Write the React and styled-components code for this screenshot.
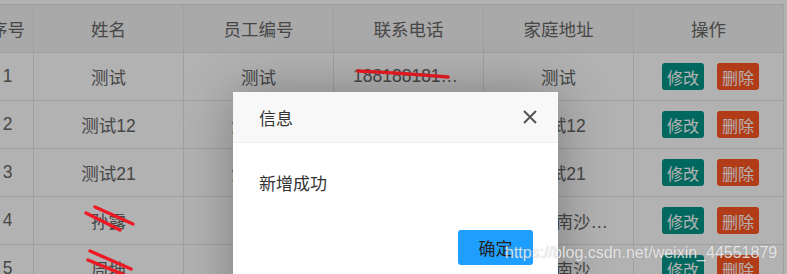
import React from "react";
import styled, { createGlobalStyle } from "styled-components";

const Global = createGlobalStyle`
  html, body { margin: 0; padding: 0; background: #fff; }
  body { width: 787px; height: 274px; overflow: hidden; position: relative;
    font-family: "Liberation Sans", Arial, "Noto Sans CJK SC", sans-serif; }
`;

const Page = styled.div`
  position: relative;
  width: 787px;
  height: 274px;
  overflow: hidden;
  background: #fff;
  padding-top: 4px;
  box-sizing: border-box;
`;

const Table = styled.div`
  margin-left: -18px;
  width: 802px;
  border-top: 1px solid #e6e6e6;
`;

const Row = styled.div`
  display: grid;
  grid-template-columns: 52px repeat(5, 150px);
  height: 48px;
  background: ${(p) => (p.$head ? "#f2f2f2" : "#fff")};
  border-bottom: 1px solid #e6e6e6;
  box-sizing: border-box;
`;

const Cell = styled.div`
  position: relative;
  display: flex;
  align-items: center;
  justify-content: center;
  padding: ${(p) => (p.$narrow ? "0" : p.$ops ? "0 17px 0 21px" : "0 19px")};
  border-right: 1px solid #e6e6e6;
  color: #666;
  font-size: 17.5px;
  min-width: 0;
  box-sizing: border-box;
  gap: 13px;
`;

const Text = styled.span`
  display: block;
  max-width: 100%;
  overflow: hidden;
  white-space: nowrap;
  text-overflow: ellipsis;
`;

const SmallBtn = styled.span`
  display: inline-flex;
  align-items: center;
  justify-content: center;
  width: 42px;
  height: 27px;
  border-radius: 3px;
  font-size: 16px;
  color: #fff;
  background: ${(p) => (p.$danger ? "#ff5722" : "#009688")};
`;

const Scribble = styled.svg`
  position: absolute;
  left: 0;
  top: 0;
  overflow: visible;
  pointer-events: none;
`;

const Shade = styled.div`
  position: absolute;
  inset: 0;
  background: rgba(0, 0, 0, 0.3);
`;

const Layer = styled.div`
  position: absolute;
  left: 233px;
  top: 92px;
  width: 325px;
  height: 240px;
  background: #fff;
  box-shadow: 1px 1px 50px rgba(0, 0, 0, 0.3);
  font-family: "Noto Sans CJK SC", "Liberation Sans", sans-serif;
`;

const LayerTitle = styled.div`
  height: 50px;
  display: flex;
  align-items: center;
  justify-content: space-between;
  padding: 0 20px 0 26px;
  background: #f8f8f8;
  border-bottom: 1px solid #eee;
  color: #333;
  font-size: 17px;
`;

const CloseIcon = styled.svg`
  width: 16px;
  height: 16px;
  display: block;
`;

const LayerBody = styled.div`
  padding: 28px 26px 0;
  height: 59px;
  color: #333;
  font-size: 17px;
  line-height: 24px;
`;

const BtnBar = styled.div`
  display: flex;
  justify-content: flex-end;
  padding: 0 25px 0 0;
`;

const OkBtn = styled.span`
  display: inline-flex;
  align-items: center;
  justify-content: center;
  width: 75px;
  height: 35px;
  border-radius: 3px;
  background: #1e9fff;
  color: #222;
  font-size: 17px;
`;

const Watermark = styled.div`
  position: absolute;
  left: 505px;
  top: 244px;
  font-family: "Liberation Sans", Arial, sans-serif;
  font-size: 16px;
  color: rgba(255, 255, 255, 0.75);
  text-shadow: 0 0 1px rgba(120, 120, 120, 0.5);
  white-space: nowrap;
`;

const head = ["序号", "姓名", "员工编号", "联系电话", "家庭地址", "操作"];
const rows = [
  ["1", "测试", "测试", "188188181888", "测试"],
  ["2", "测试12", "测试12", "13812345678", "测试12"],
  ["3", "测试21", "测试21", "13812345678", "测试21"],
  ["4", "孙露", "1004", "13812345678", "广州市南沙区黄阁镇"],
  ["5", "周坤", "1005", "13812345678", "广州市南沙区黄阁镇"],
];

const Red = ({ lines }) => (
  <Scribble width="1" height="1">
    {lines.map((d, i) => (
      <path key={i} d={d} stroke="#ec1a24" strokeWidth="3.4" fill="none" strokeLinecap="round" />
    ))}
  </Scribble>
);

export default function App() {
  return (
    <>
      <Global />
      <Page>
        <Table>
          <Row $head>
            {head.map((h, i) => (
              <Cell key={h} $narrow={i === 0}>
                <Text>{h}</Text>
              </Cell>
            ))}
          </Row>
          {rows.map((r) => (
            <Row key={r[0]}>
              {r.map((c, i) => (
                <Cell key={i} $narrow={i === 0}>
                  <Text>{c}</Text>
                </Cell>
              ))}
              <Cell $ops>
                <SmallBtn>修改</SmallBtn>
                <SmallBtn $danger>删除</SmallBtn>
              </Cell>
            </Row>
          ))}
        </Table>
        <Shade />
        <Red
          lines={[
            "M358 71 Q400 73 448 77",
            "M95 207 L133 224",
            "M86 213 L120 230",
            "M90 251 L131 269",
            "M88 260 L127 276",
          ]}
        />
        <Layer>
          <LayerTitle>
            信息
            <CloseIcon viewBox="0 0 16 16">
              <path d="M2 2 L14 14 M14 2 L2 14" stroke="#555" strokeWidth="2" />
            </CloseIcon>
          </LayerTitle>
          <LayerBody>新增成功</LayerBody>
          <BtnBar>
            <OkBtn>确定</OkBtn>
          </BtnBar>
        </Layer>
        <Watermark>https://blog.csdn.net/weixin_44551879</Watermark>
      </Page>
    </>
  );
}
